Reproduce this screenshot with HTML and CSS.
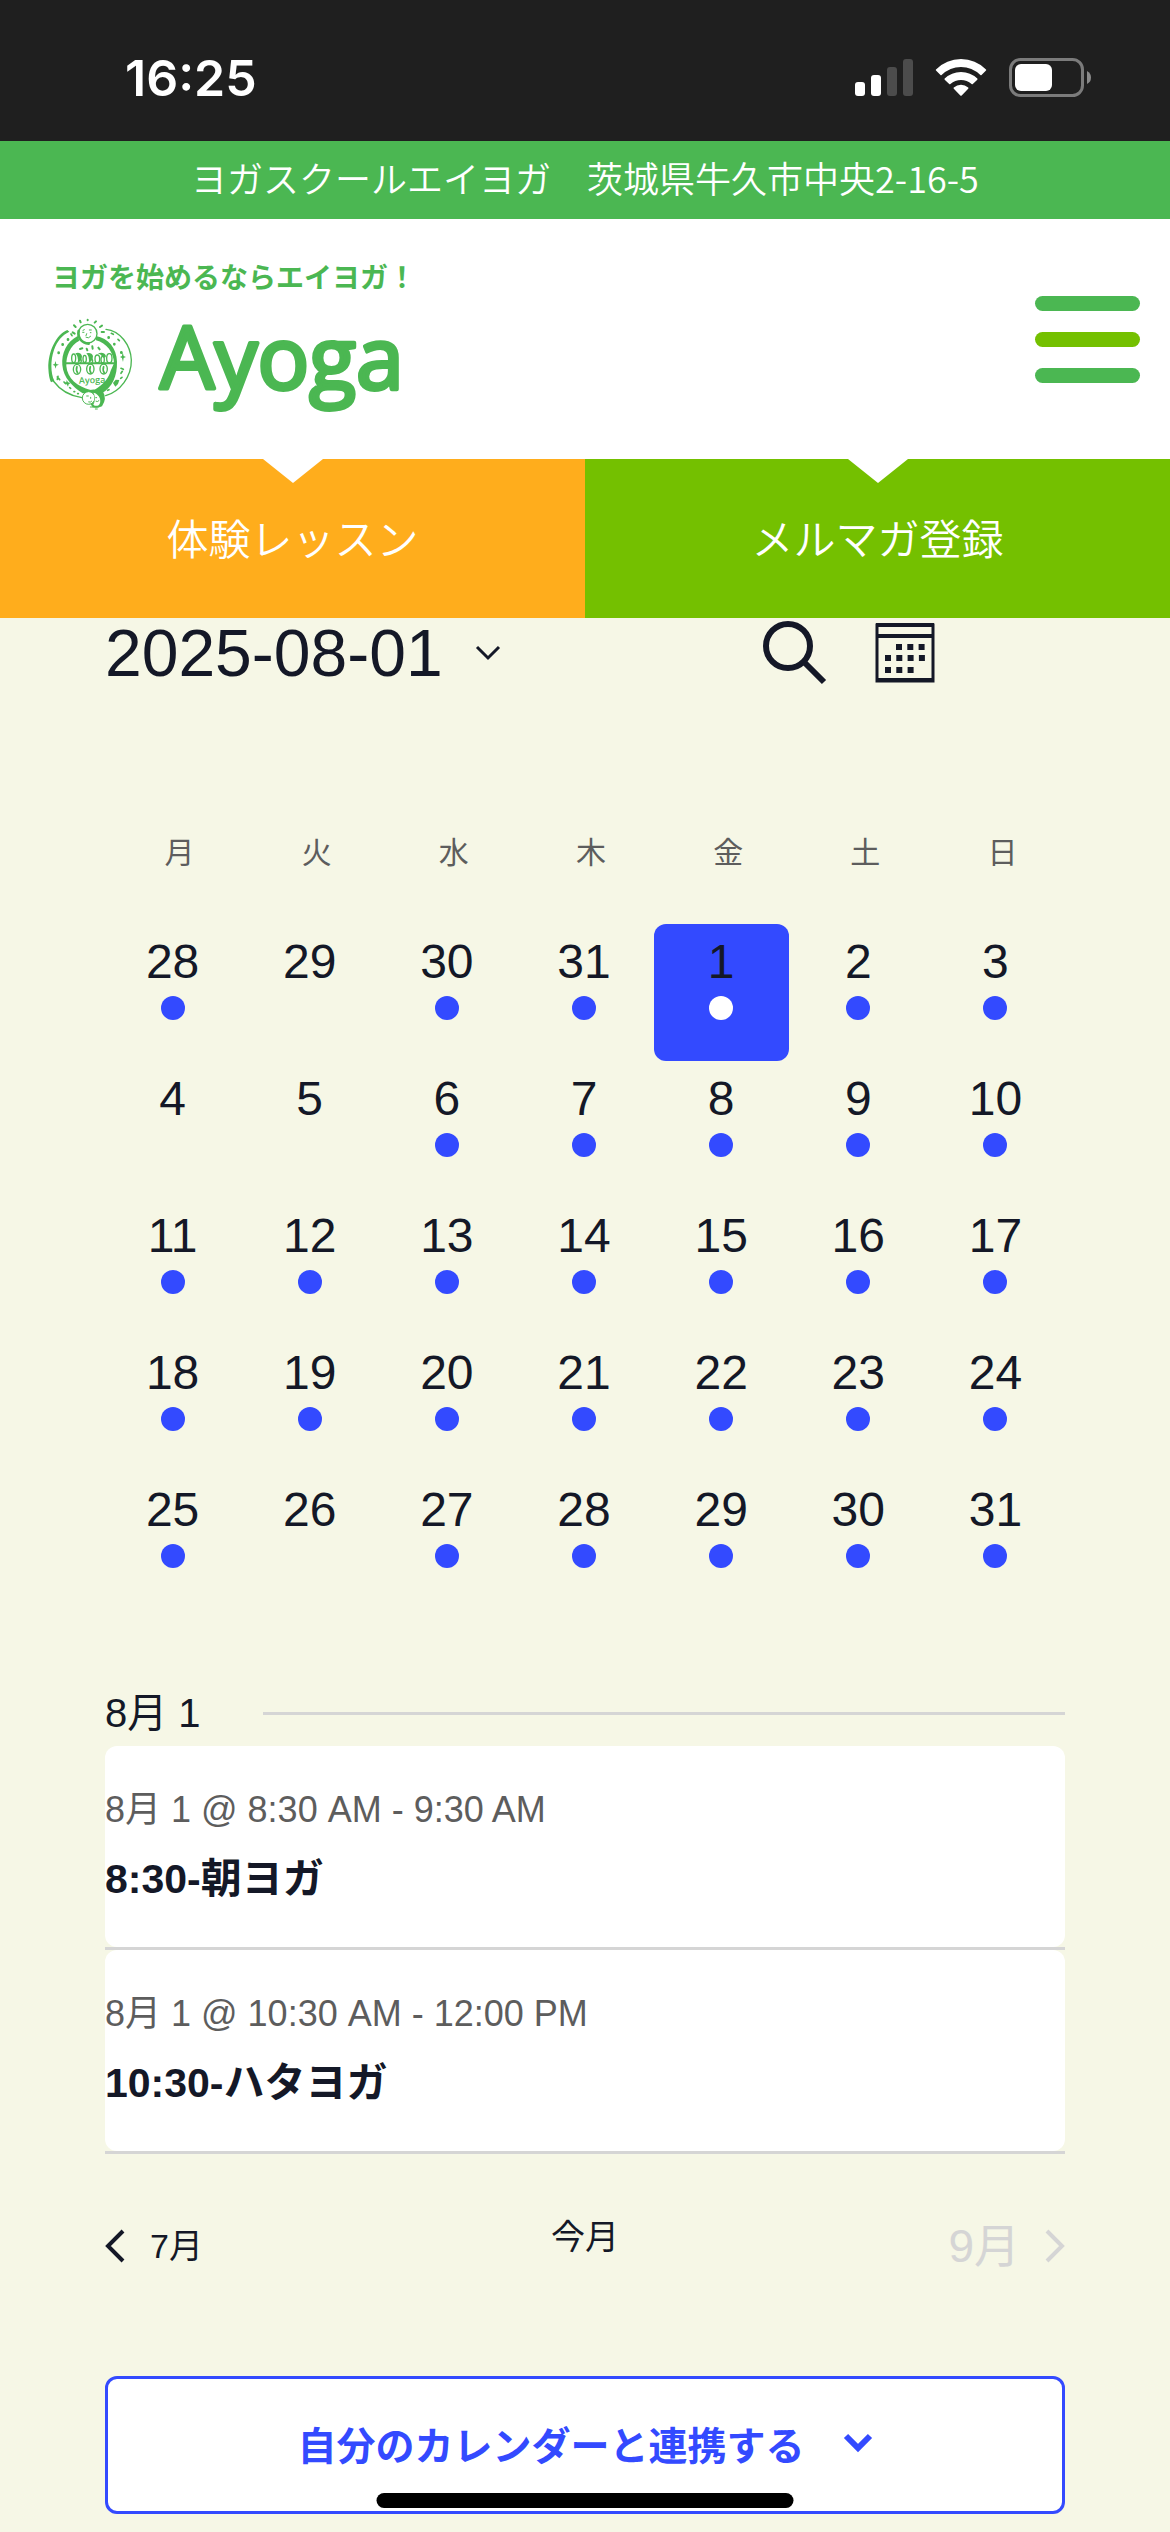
FILE: index.html
```
<!DOCTYPE html>
<html lang="ja">
<head>
    <meta charset="UTF-8">
    <meta name="viewport" content="width=device-width, initial-scale=1.0">
    <title>ヨガスクールエイヨガ</title>
    <link rel="stylesheet" href="styles.css">
</head>
<body>
    <div class="status-bar">
        <span class="clock">16:25</span>
        <div class="status-icons">
            <svg width="58" height="38" viewBox="0 0 58 38">
                <rect x="0" y="23" width="10" height="14" rx="3" fill="#fff"/>
                <rect x="16" y="16" width="10" height="21" rx="3" fill="#fff"/>
                <rect x="32" y="8" width="10" height="29" rx="3" fill="#4c4c4c"/>
                <rect x="48" y="0" width="10" height="37" rx="3" fill="#4c4c4c"/>
            </svg>
            <svg width="52" height="38" viewBox="0 0 52 38" fill="#fff">
                <path d="M1 10.500Q11.500 0 26 0Q40.500 0 51 10.500Q51.500 11 51 11.600L46.500 16Q46 16.400 45.400 16Q37 8 26 8Q15 8 6.600 16Q6 16.400 5.500 16L1 11.600Q.5 11 1 10.500Z"/>
                <path d="M9.700 19.600Q16.500 13 26 13Q35.500 13 42.300 19.600Q42.800 20.200 42.300 20.800L37.800 25Q37.200 25.500 36.600 25Q32 21 26 21Q20 21 15.400 25Q14.800 25.500 14.200 25L9.700 20.800Q9.200 20.200 9.700 19.600Z"/>
                <path d="M18.800 28.600Q22 25.800 26 25.800Q30 25.800 33.200 28.600Q33.800 29.200 33.200 29.800L26.700 36.500Q26 37.200 25.300 36.500L18.800 29.800Q18.200 29.200 18.800 28.600Z"/>
            </svg>
            <svg width="82" height="40" viewBox="0 0 82 40">
                <rect x="1.500" y="1.500" width="72" height="36" rx="10" fill="none" stroke="#7b7b7b" stroke-width="3"/>
                <rect x="6" y="6" width="37" height="27" rx="6" fill="#fff"/>
                <path d="M78 13Q82 15 82 19.500Q82 24 78 26Z" fill="#8a8a8a"/>
            </svg>
        </div>
    </div>

    <p class="address">ヨガスクールエイヨガ　茨城県牛久市中央2-16-5</p>

    <header class="header">
        <a class="logo" href="#">
            <span class="tagline">ヨガを始めるならエイヨガ！</span>
            <svg class="brand" width="380" height="113" viewBox="0 0 380 113">
                <g transform="scale(.3333)" fill="none" stroke="#4bb752" stroke-linecap="round">
                    <!-- outer ring -->
                    <path fill="#4bb752" stroke="none" d="M82 60C48 74 24 125 25 175C26 196 29 210 33 217L43 212C32 190 31 150 42 120C52 92 66 76 88 65Z"/>
                    <path stroke-width="4" d="M40 213C60 240 92 258 126 263M198 58C240 62 272 105 274 150C275 200 240 245 197 257"/>
                    <!-- inner ring -->
                    <path fill="#4bb752" stroke="none" d="M113 78C80 95 64 130 67 165C70 204 98 230 128 250L152 240C112 230 82 206 79 168C78 138 90 106 118 92Z"/>
                    <path fill="#4bb752" stroke="none" d="M168 78C205 84 230 115 231 155C232 200 217 230 186 250L163 240C192 222 206 204 212 182L222 160C222 130 200 98 168 91Z"/>
                    <path stroke-width="6" d="M74 160H224"/>
                    <!-- sun -->
                    <circle cx="143" cy="71" r="28" stroke-width="4" fill="#fff"/>
                    <path stroke-width="8" d="M116 63C112 82 124 99 146 101"/>
                    <path stroke-width="3" d="M128 67h4M148 60h6M151 68h2M140 71l-2 6M138 82q8 5 14-3M129 61l4-2"/>
                    <path stroke-width="6" d="M104 71l-6-4M107 51l-5-5M122 37l-2-5M143 31v-2M164 38l4-4M180 51l6-4M185 66l7 0M120 117l7-2M142 121l-2-5M158 116l-1-7M175 113l4 5"/>
                    <!-- people in two rows -->
                    <path fill="#4bb752" stroke="none" d="M106 130q15-5 20 8q0 15-13 21q4-18-7-29ZM139 130q16-4 20 8q0 15-13 21q4-18-7-29ZM174 130q18-6 24 8q-2 8-10 3q-5-8-14-11Z"/>
                    <g stroke-width="4">
                        <ellipse cx="101" cy="145" rx="6" ry="13"/>
                        <ellipse cx="134" cy="147" rx="5" ry="11"/>
                        <ellipse cx="172" cy="147" rx="7" ry="12"/>
                        <ellipse cx="188" cy="149" rx="5" ry="10"/>
                        <ellipse cx="208" cy="145" rx="8" ry="14"/>
                        <path d="M119 143q8 8 3 15M153 143q8 8 3 15"/>
                        <ellipse cx="111" cy="178" rx="11" ry="15"/>
                        <ellipse cx="151" cy="177" rx="11" ry="15"/>
                        <ellipse cx="191" cy="177" rx="11" ry="15"/>
                        <path stroke-width="5" d="M111 170q-4 10 2 19M151 170q-4 10 2 19M191 170q-4 10 2 19"/>
                    </g>
                    <text class="brand-small" x="117" y="221" transform="rotate(-2 117 221)">Ayoga</text>
                    <!-- two heads below -->
                    <path fill="#4bb752" stroke="none" d="M128 246Q156 232 188 243Q202 266 186 289Q175 295 158 292Z"/>
                    <circle cx="146" cy="264" r="19" stroke-width="3" fill="#fff"/>
                    <path fill="#fff" stroke="none" d="M161 248q14 4 19 18q3 12-4 20q-9 4-16-2q9-17 1-36Z"/>
                    <path stroke-width="3" d="M140 258h5M152 262v3M146 276q6 2 9-2M167 263h3M168 274q5 3 9-2M151 291h24M166 297h6"/>
                    <!-- pattern in the ring -->
                    <path stroke-width="8" d="M84 88v1M68 103v1M56 128v1M206 82v1M223 102v1M244 127v1"/>
                    <path stroke-width="5" d="M93 72l3 5M214 70l6 3M234 88l4 4M72 216l5 5M89 233l3 2M102 245h2M113 251h2M203 241l4-2M242 205l4-3M52 201l7 8M54 199l-2 9M243 175l7 3M247 184l-4 6"/>
                    <path fill="#4bb752" stroke="none" d="M46 153l3 9l8 2l-8 3l-2 9l-3-9l-6-3l6-2ZM248 126l3 12l7 3l-7 3l-2 12l-3-12l-6-3l6-3ZM80 210l4 7l8 2l-6 4l-2 7l-4-7l-7-3l6-3ZM219 219l8-10l11 1l-4 12l-8 8Z"/>
                </g>
                <text class="brand-name" x="120" y="79">Ayoga</text>
            </svg>
        </a>
        <button class="menu-button" type="button" aria-label="メニュー">
            <span></span>
            <span></span>
            <span></span>
        </button>
    </header>

    <nav class="tabs">
        <a class="tab trial" href="#">体験レッスン</a>
        <a class="tab magazine" href="#">メルマガ登録</a>
    </nav>

    <main class="events">
        <div class="toolbar">
            <button class="date-button" type="button">
                2025-08-01
                <svg width="26" height="16" viewBox="0 0 26 16" fill="none" stroke="#141827" stroke-width="3"><path d="M2 2l11 11L24 2"/></svg>
            </button>
            <div class="tools">
                <button type="button" aria-label="検索">
                    <svg width="64" height="64" viewBox="0 0 64 64" fill="none" stroke="#141827" stroke-width="6"><circle cx="25" cy="25" r="22"/><path d="M41 41l20 20"/></svg>
                </button>
                <button type="button" aria-label="月表示">
                    <svg width="60" height="60" viewBox="0 0 60 60" fill="#141827">
                        <path fill="none" stroke="#141827" stroke-width="3" d="M2 2H58V58H2Z"/>
                        <path d="M1 0H59V4H1ZM1 11H59V15H1ZM1 55H59V59H1Z"/>
                        <path fill="none" stroke="#141827" stroke-width="6" stroke-dasharray="6 5.300" d="M21 24h30M10 35h41M10 47h29"/>
                    </svg>
                </button>
            </div>
        </div>

        <table class="calendar">
            <thead>
                <tr><th>月</th><th>火</th><th>水</th><th>木</th><th>金</th><th>土</th><th>日</th></tr>
            </thead>
            <tbody>
                <tr>
                    <td><button class="day has-event" type="button">28</button></td>
                    <td><button class="day" type="button">29</button></td>
                    <td><button class="day has-event" type="button">30</button></td>
                    <td><button class="day has-event" type="button">31</button></td>
                    <td><button class="day has-event selected" type="button">1</button></td>
                    <td><button class="day has-event" type="button">2</button></td>
                    <td><button class="day has-event" type="button">3</button></td>
                </tr>
                <tr>
                    <td><button class="day" type="button">4</button></td>
                    <td><button class="day" type="button">5</button></td>
                    <td><button class="day has-event" type="button">6</button></td>
                    <td><button class="day has-event" type="button">7</button></td>
                    <td><button class="day has-event" type="button">8</button></td>
                    <td><button class="day has-event" type="button">9</button></td>
                    <td><button class="day has-event" type="button">10</button></td>
                </tr>
                <tr>
                    <td><button class="day has-event" type="button">11</button></td>
                    <td><button class="day has-event" type="button">12</button></td>
                    <td><button class="day has-event" type="button">13</button></td>
                    <td><button class="day has-event" type="button">14</button></td>
                    <td><button class="day has-event" type="button">15</button></td>
                    <td><button class="day has-event" type="button">16</button></td>
                    <td><button class="day has-event" type="button">17</button></td>
                </tr>
                <tr>
                    <td><button class="day has-event" type="button">18</button></td>
                    <td><button class="day has-event" type="button">19</button></td>
                    <td><button class="day has-event" type="button">20</button></td>
                    <td><button class="day has-event" type="button">21</button></td>
                    <td><button class="day has-event" type="button">22</button></td>
                    <td><button class="day has-event" type="button">23</button></td>
                    <td><button class="day has-event" type="button">24</button></td>
                </tr>
                <tr>
                    <td><button class="day has-event" type="button">25</button></td>
                    <td><button class="day" type="button">26</button></td>
                    <td><button class="day has-event" type="button">27</button></td>
                    <td><button class="day has-event" type="button">28</button></td>
                    <td><button class="day has-event" type="button">29</button></td>
                    <td><button class="day has-event" type="button">30</button></td>
                    <td><button class="day has-event" type="button">31</button></td>
                </tr>
            </tbody>
        </table>

        <h2 class="day-heading">8月 1</h2>

        <ul class="event-list">
            <li>
                <article class="event">
                    <p class="event-time">8月 1 @ 8:30 AM - 9:30 AM</p>
                    <h3><a href="#">8:30-朝ヨガ</a></h3>
                </article>
            </li>
            <li>
                <article class="event">
                    <p class="event-time">8月 1 @ 10:30 AM - 12:00 PM</p>
                    <h3><a href="#">10:30-ハタヨガ</a></h3>
                </article>
            </li>
        </ul>

        <nav class="month-nav">
            <a class="prev" href="#">
                <svg width="20" height="34" viewBox="0 0 20 34" fill="none" stroke="#141827" stroke-width="4"><path d="M18 2L3 17l15 15"/></svg>
                7月
            </a>
            <a class="today" href="#">今月</a>
            <button class="next" type="button" disabled>
                9月
                <svg width="20" height="34" viewBox="0 0 20 34" fill="none" stroke="#d5d5d5" stroke-width="4"><path d="M2 2l15 15L2 32"/></svg>
            </button>
        </nav>

        <button class="subscribe" type="button">
            自分のカレンダーと連携する
            <svg width="30" height="20" viewBox="0 0 30 20" fill="none" stroke="#334aff" stroke-width="6"><path d="M3 3l12 12L27 3"/></svg>
        </button>
    </main>

    <div class="home-indicator"></div>
</body>
</html>
```
FILE: styles.css
```
* {
    box-sizing: border-box;
}

body {
    margin: 0;
    background: #f6f7e6;
    color: #141827;
    font-family: "Liberation Sans", "Noto Sans CJK JP", sans-serif;
}

h2, h3, p, ul {
    margin: 0;
    padding: 0;
}

a {
    color: inherit;
    text-decoration: none;
}

button {
    margin: 0;
    padding: 0;
    border: 0;
    background: none;
    color: inherit;
    font-family: inherit;
}

svg {
    display: block;
}

/* status bar */
.status-bar {
    display: flex;
    justify-content: space-between;
    align-items: center;
    height: 141px;
    padding: 14px 79px 0 125px;
    background: #1f1f1f;
    color: #fff;
}

.clock {
    font-family: Inter, sans-serif;
    font-size: 50px;
    font-weight: 600;
}

.status-icons {
    display: flex;
    align-items: center;
    gap: 22px;
}

.address {
    padding-bottom: 6px;
    background: #4bb752;
    color: #fff;
    font-family: "Noto Sans CJK JP", sans-serif;
    font-size: 36px;
    font-weight: 350;
    line-height: 72px;
    text-align: center;
}

/* header */
.header {
    display: flex;
    justify-content: space-between;
    align-items: center;
    padding: 37px 30px 36px 40px;
    background: #fff;
}

.tagline {
    display: block;
    padding-left: 12px;
    color: #4bb752;
    font-family: "Noto Sans CJK JP", sans-serif;
    font-size: 28px;
    font-weight: 700;
    line-height: 40px;
}

.brand {
    margin-top: 14px;
    overflow: visible;
}

.brand-name {
    fill: #4bb752;
    stroke: #4bb752;
    stroke-width: 4px;
    stroke-linejoin: round;
    font-family: "Open Sans", sans-serif;
    font-size: 86px;
    font-weight: 500;
}

.brand-small {
    fill: #4bb752;
    stroke: none;
    font-family: "Open Sans", sans-serif;
    font-size: 27px;
    font-weight: 600;
}

.menu-button {
    display: flex;
    flex-direction: column;
    gap: 21px;
    width: 105px;
}

.menu-button span {
    height: 15px;
    border-radius: 8px;
    background: #4bb752;
}

.menu-button span:nth-child(2) {
    background: #74c000;
}

.tabs {
    display: grid;
    grid-template-columns: 1fr 1fr;
}

.tab {
    position: relative;
    padding-bottom: 4px;
    color: #fff;
    font-family: "Noto Sans CJK JP", sans-serif;
    font-size: 42px;
    font-weight: 350;
    line-height: 155px;
    text-align: center;
}

.tab::before {
    content: "";
    position: absolute;
    top: 0;
    left: 50%;
    margin-left: -30px;
    border: 30px solid transparent;
    border-top: 24px solid #fff;
    border-bottom: 0;
}

.trial {
    background: #ffad1c;
}

.magazine {
    background: #74c000;
}

/* calendar */
.events {
    padding: 0 105px 18px;
}

.toolbar {
    display: flex;
    justify-content: space-between;
    align-items: center;
    padding-right: 130px;
}

.date-button {
    display: flex;
    align-items: center;
    gap: 32px;
    font-size: 66px;
    line-height: 70px;
}

.tools {
    display: flex;
    align-items: center;
    gap: 48px;
}

.calendar {
    width: 100%;
    margin-top: 118px;
    border-collapse: collapse;
    table-layout: fixed;
}

.calendar th {
    padding: 0 0 24px 12px;
    color: #5d5d5d;
    font-size: 30px;
    font-weight: 400;
    line-height: 94px;
}

.calendar td {
    padding: 0 2px 0 0;
}

.day {
    display: flex;
    flex-direction: column;
    align-items: center;
    width: 100%;
    height: 137px;
    padding-top: 14px;
    border-radius: 12px;
    font-size: 48px;
    line-height: 48px;
}

.has-event::after {
    content: "";
    width: 24px;
    height: 24px;
    margin-top: 10px;
    border-radius: 50%;
    background: #334aff;
}

.selected {
    background: #334aff;
}

.selected::after {
    background: #fff;
}

/* events of the day */
.day-heading {
    display: flex;
    align-items: center;
    gap: 62px;
    margin: 80px 0 9px;
    font-size: 40px;
    font-weight: 400;
    line-height: 48px;
}

.day-heading::after {
    content: "";
    flex: 1;
    height: 3px;
    background: #d5d5d5;
}

.event-list {
    list-style: none;
}

.event-list li {
    border-bottom: 3px solid #d5d5d5;
}

.event {
    padding: 40px 0 38px;
    border-radius: 12px;
    background: #fff;
}

.event-time {
    color: #5d5d5d;
    font-size: 36px;
    line-height: 48px;
}

.event h3 {
    margin-top: 15px;
    font-size: 41px;
    line-height: 60px;
}

.month-nav {
    display: grid;
    grid-template-columns: 1fr auto 1fr;
    align-items: start;
    margin-top: 50px;
    font-size: 34px;
}

.prev,
.next {
    display: flex;
    align-items: center;
    gap: 25px;
    line-height: 84px;
}

.today {
    line-height: 66px;
}

.next {
    justify-content: flex-end;
    color: #d5d5d5;
    font-size: 46px;
}

.subscribe {
    display: flex;
    justify-content: center;
    align-items: center;
    gap: 38px;
    width: 100%;
    height: 138px;
    margin-top: 88px;
    padding-bottom: 4px;
    border: 3px solid #334aff;
    border-radius: 12px;
    background: #fff;
    color: #334aff;
    font-size: 39px;
    font-weight: 700;
}

.home-indicator {
    position: fixed;
    bottom: 24px;
    left: 50%;
    width: 417px;
    height: 15px;
    border-radius: 8px;
    background: #000;
    transform: translateX(-50%);
}
```
